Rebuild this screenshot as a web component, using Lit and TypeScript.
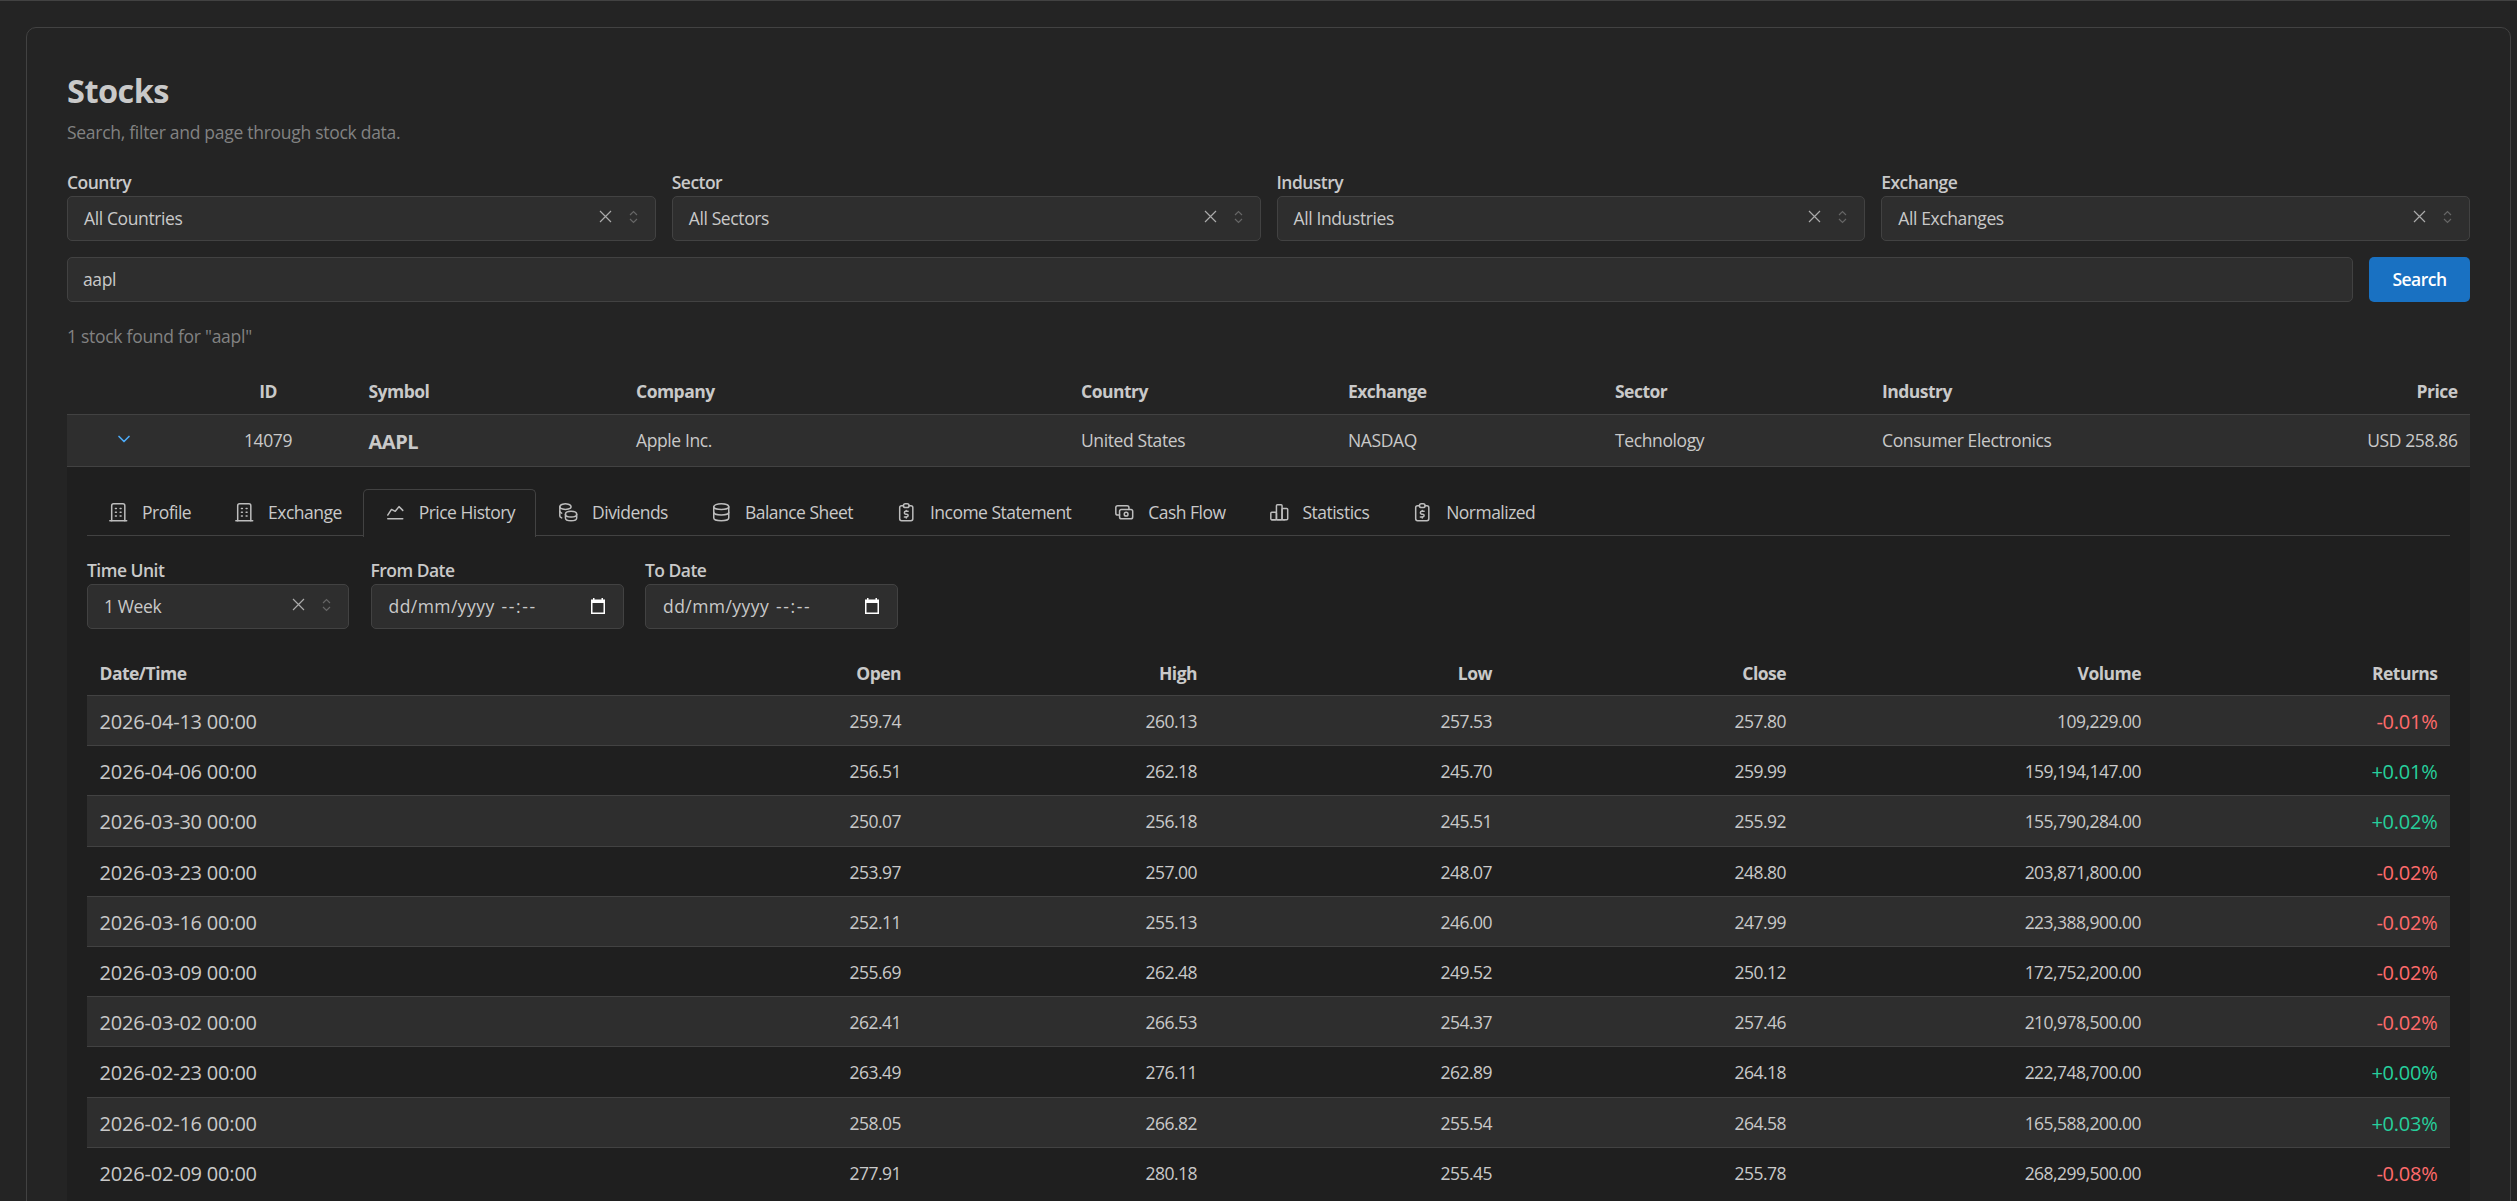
import { LitElement, html, css, svg } from "lit";
import { customElement } from "lit/decorators.js";

const ICONS: Record<string, string[]> = {
  building: ["M3 21l18 0", "M9 8l1 0", "M9 12l1 0", "M9 16l1 0", "M14 8l1 0", "M14 12l1 0", "M14 16l1 0", "M5 21v-16a2 2 0 0 1 2 -2h10a2 2 0 0 1 2 2v16"],
  chartLine: ["M4 19l16 0", "M4 15l4 -6l4 2l4 -5l4 4"],
  coins: [
    "M9 14c0 1.657 2.686 3 6 3s6 -1.343 6 -3s-2.686 -3 -6 -3s-6 1.343 -6 3z",
    "M9 14v4c0 1.656 2.686 3 6 3s6 -1.344 6 -3v-4",
    "M3 6c0 1.072 1.144 2.062 3 2.598s4.144 .536 6 0c1.856 -.536 3 -1.526 3 -2.598c0 -1.072 -1.144 -2.062 -3 -2.598s-4.144 -.536 -6 0c-1.856 .536 -3 1.526 -3 2.598z",
    "M3 6v10c0 .888 .772 1.45 2 2",
    "M3 11c0 .888 .772 1.45 2 2",
  ],
  database: ["M12 6m-8 0a8 3 0 1 0 16 0a8 3 0 1 0 -16 0", "M4 6v6a8 3 0 0 0 16 0v-6", "M4 12v6a8 3 0 0 0 16 0v-6"],
  report: [
    "M9 5h-2a2 2 0 0 0 -2 2v12a2 2 0 0 0 2 2h10a2 2 0 0 0 2 -2v-12a2 2 0 0 0 -2 -2h-2",
    "M9 3m0 2a2 2 0 0 1 2 -2h2a2 2 0 0 1 2 2v0a2 2 0 0 1 -2 2h-2a2 2 0 0 1 -2 -2z",
    "M14 11h-2.5a1.5 1.5 0 0 0 0 3h1a1.5 1.5 0 0 1 0 3h-2.5",
    "M12 17v1m0 -8v1",
  ],
  cash: [
    "M7 9m0 2a2 2 0 0 1 2 -2h10a2 2 0 0 1 2 2v6a2 2 0 0 1 -2 2h-10a2 2 0 0 1 -2 -2z",
    "M14 14m-2 0a2 2 0 1 0 4 0a2 2 0 1 0 -4 0",
    "M17 9v-2a2 2 0 0 0 -2 -2h-10a2 2 0 0 0 -2 2v6a2 2 0 0 0 2 2h2",
  ],
  chartBar: [
    "M3 13a1 1 0 0 1 1 -1h4a1 1 0 0 1 1 1v6a1 1 0 0 1 -1 1h-4a1 1 0 0 1 -1 -1z",
    "M15 9a1 1 0 0 1 1 -1h4a1 1 0 0 1 1 1v10a1 1 0 0 1 -1 1h-4a1 1 0 0 1 -1 -1z",
    "M9 5a1 1 0 0 1 1 -1h4a1 1 0 0 1 1 1v14a1 1 0 0 1 -1 1h-4a1 1 0 0 1 -1 -1z",
    "M4 20h14",
  ],
  chevronDown: ["M6 9l6 6l6 -6"],
};

const icon = (name: string) => html`<svg class="icon ${name}" viewBox="0 0 24 24" fill="none" stroke="currentColor" stroke-linecap="round" stroke-linejoin="round">
  ${ICONS[name].map((d) => svg`<path d=${d}></path>`)}
</svg>`;

const TABS = [
  ["Profile", "building"],
  ["Exchange", "building"],
  ["Price History", "chartLine"],
  ["Dividends", "coins"],
  ["Balance Sheet", "database"],
  ["Income Statement", "report"],
  ["Cash Flow", "cash"],
  ["Statistics", "chartBar"],
  ["Normalized", "report"],
];

const PRICES = [
  ["2026-04-13 00:00", "259.74", "260.13", "257.53", "257.80", "109,229.00", "-0.01%"],
  ["2026-04-06 00:00", "256.51", "262.18", "245.70", "259.99", "159,194,147.00", "+0.01%"],
  ["2026-03-30 00:00", "250.07", "256.18", "245.51", "255.92", "155,790,284.00", "+0.02%"],
  ["2026-03-23 00:00", "253.97", "257.00", "248.07", "248.80", "203,871,800.00", "-0.02%"],
  ["2026-03-16 00:00", "252.11", "255.13", "246.00", "247.99", "223,388,900.00", "-0.02%"],
  ["2026-03-09 00:00", "255.69", "262.48", "249.52", "250.12", "172,752,200.00", "-0.02%"],
  ["2026-03-02 00:00", "262.41", "266.53", "254.37", "257.46", "210,978,500.00", "-0.02%"],
  ["2026-02-23 00:00", "263.49", "276.11", "262.89", "264.18", "222,748,700.00", "+0.00%"],
  ["2026-02-16 00:00", "258.05", "266.82", "255.54", "264.58", "165,588,200.00", "+0.03%"],
  ["2026-02-09 00:00", "277.91", "280.18", "255.45", "255.78", "268,299,500.00", "-0.08%"],
];

@customElement("app-root")
export class AppRoot extends LitElement {
  static styles = css`
    :host {
      display: block;
      height: 100vh;
      overflow: hidden;
      box-sizing: border-box;
      background: #242424;
      border-top: 1px solid #424242;
      padding: 26px 6px 0 26px;
      color: #c9c9c9;
      font-family: "Open Sans", sans-serif;
      font-size: 17.5px;
      letter-spacing: -0.03em;
      line-height: 1.55;
    }
    * {
      box-sizing: border-box;
    }
    .card {
      border: 1px solid #424242;
      border-radius: 10px;
      padding: 42px 40px 40px;
    }
    h2 {
      margin: 0 0 6.5px;
      font-size: 32.5px;
      font-weight: 700;
      line-height: 1.3;
    }
    .sub {
      margin: 0 0 23px;
      color: #828282;
      letter-spacing: -0.016em;
    }
    .filters {
      display: grid;
      grid-template-columns: repeat(4, 1fr);
      gap: 16px;
    }
    label,
    .label {
      display: block;
      font-weight: 600;
      line-height: 27px;
    }
    .select,
    .date,
    .search input {
      height: 45px;
      background: #2e2e2e;
      border: 1px solid #424242;
      border-radius: 5px;
      color: #c9c9c9;
      font: inherit;
      letter-spacing: -0.022em;
    }
    .select {
      display: flex;
      align-items: center;
      padding: 0 16px;
    }
    .select .value {
      flex: 1;
      padding-top: 1px;
    }
    .x {
      width: 13px;
      height: 13px;
      color: #aaa;
      margin-right: 16px;
      margin-top: -3px;
    }
    .updown {
      width: 11px;
      height: 14px;
      color: #666;
      margin-top: -3px;
    }
    .search {
      display: flex;
      gap: 16px;
      margin-top: 16px;
    }
    .search input {
      flex: 1;
      padding: 0 15px;
      outline: none;
    }
    .search button {
      width: 101px;
      height: 45px;
      background: #1971c2;
      border: 0;
      border-radius: 5px;
      color: #fff;
      font: inherit;
      font-weight: 600;
      letter-spacing: inherit;
    }
    .count {
      margin: 21px 0 0;
      color: #828282;
      letter-spacing: -0.016em;
    }
    table {
      width: 100%;
      border-collapse: collapse;
      table-layout: fixed;
    }
    th,
    td {
      padding: 2px 12.5px 0;
      text-align: left;
      white-space: nowrap;
    }
    th {
      font-weight: 700;
    }
    .stocks {
      margin-top: 17px;
    }
    .stocks thead tr {
      height: 47px;
      border-bottom: 1px solid #424242;
    }
    .stocks tbody tr {
      height: 52px;
      background: #2e2e2e;
      border-bottom: 1px solid #424242;
    }
    .stocks td {
      letter-spacing: -0.022em;
    }
    .stocks .center {
      text-align: center;
    }
    .stocks .right {
      text-align: right;
    }
    .stocks .symbol {
      font-size: 20px;
      font-weight: 700;
    }
    .expand {
      color: #4dabf7;
    }
    .expand .icon {
      width: 20px;
      height: 20px;
      stroke-width: 2;
      display: block;
      margin: -4px auto 0;
    }
    .c0 { width: 113px; }
    .c1 { width: 176px; }
    .c2 { width: 267.5px; }
    .c3 { width: 445px; }
    .c4, .c5, .c6, .c7 { width: 267px; }
    .panel {
      background: #1f1f1f;
      padding: 22px 20px 20px;
    }
    .tabs {
      display: flex;
      border-bottom: 1px solid #424242;
      height: 47px;
    }
    .tab {
      display: flex;
      align-items: center;
      gap: 12.5px;
      height: 48px;
      padding: 0 20px;
      border: 1px solid transparent;
      border-bottom: 0;
      border-radius: 5px 5px 0 0;
    }
    .tab:first-child {
      margin-left: -1px;
    }
    .tab.active {
      border-color: #424242;
      background: #1f1f1f;
    }
    .tab .icon {
      width: 22.5px;
      height: 22.5px;
      stroke-width: 1.6;
      color: #bdbdbd;
      margin-top: -1px;
    }
    .range {
      display: flex;
      gap: 21.5px;
      margin-top: 21px;
    }
    .range .unit {
      width: 262px;
    }
    .range .when {
      width: 253px;
    }
    .date {
      display: flex;
      align-items: center;
      justify-content: space-between;
      padding: 1px 18px 0 17px;
      letter-spacing: 0.025em;
    }
    .date .time {
      margin-left: 7px;
      letter-spacing: 0.09em;
    }
    .date svg {
      width: 14px;
      height: 16px;
      margin-top: -1px;
    }
    .prices {
      margin-top: 21px;
    }
    .prices thead tr {
      height: 46px;
      border-bottom: 1px solid #424242;
    }
    .prices tbody tr {
      height: 50.2px;
      border-bottom: 1px solid #424242;
    }
    .prices tbody tr:nth-child(odd) {
      background: #2e2e2e;
    }
    .prices tbody tr:last-child {
      border-bottom: 0;
    }
    .prices th:not(:first-child),
    .prices td:not(:first-child) {
      text-align: right;
    }
    .prices .stamp {
      font-size: 20px;
      letter-spacing: -0.01em;
    }
    .prices .ret {
      font-size: 20px;
      letter-spacing: -0.012em;
    }
    .neg {
      color: #ff6b6b;
    }
    .pos {
      color: #26cf9c;
    }
    .p0 { width: 500px; }
    .p1 { width: 326.5px; }
    .p2 { width: 296px; }
    .p3 { width: 295px; }
    .p4 { width: 294px; }
    .p5 { width: 355px; }
  `;

  private selectBox(value: string) {
    return html`<div class="select">
      <span class="value">${value}</span>
      <svg class="x" viewBox="0 0 13 13" fill="none" stroke="currentColor" stroke-width="1.2"><path d="M1 1l11 11M12 1L1 12"></path></svg>
      <svg class="updown" viewBox="0 0 11 14" fill="none" stroke="currentColor" stroke-width="1.2"><path d="M2 5l3.5 -3.5L9 5M2 9l3.5 3.5L9 9"></path></svg>
    </div>`;
  }

  private dateBox() {
    return html`<div class="date">
      <span>dd/mm/yyyy<span class="time">--:--</span></span>
      <svg viewBox="0 0 14 16"><path fill="#fff" d="M2 0h1.5v1.5h7V0H12v1.5h2V16H0V1.5h2zM1.5 5v9.5h11V5z"></path></svg>
    </div>`;
  }

  render() {
    return html`
      <section class="card">
        <h2>Stocks</h2>
        <p class="sub">Search, filter and page through stock data.</p>
        <div class="filters">
          ${[["Country", "All Countries"], ["Sector", "All Sectors"], ["Industry", "All Industries"], ["Exchange", "All Exchanges"]].map(
            ([l, v]) => html`<div><label>${l}</label>${this.selectBox(v)}</div>`
          )}
        </div>
        <div class="search">
          <input type="text" value="aapl" />
          <button>Search</button>
        </div>
        <p class="count">1 stock found for "aapl"</p>

        <table class="stocks">
          <colgroup>
            <col class="c0" /><col class="c1" /><col class="c2" /><col class="c3" /><col class="c4" /><col class="c5" /><col class="c6" /><col class="c7" /><col />
          </colgroup>
          <thead>
            <tr>
              <th></th>
              <th class="center">ID</th>
              <th>Symbol</th>
              <th>Company</th>
              <th>Country</th>
              <th>Exchange</th>
              <th>Sector</th>
              <th>Industry</th>
              <th class="right">Price</th>
            </tr>
          </thead>
          <tbody>
            <tr>
              <td class="expand">${icon("chevronDown")}</td>
              <td class="center">14079</td>
              <td class="symbol">AAPL</td>
              <td>Apple Inc.</td>
              <td>United States</td>
              <td>NASDAQ</td>
              <td>Technology</td>
              <td>Consumer Electronics</td>
              <td class="right">USD 258.86</td>
            </tr>
          </tbody>
        </table>

        <div class="panel">
          <div class="tabs">
            ${TABS.map(
              ([name, ic]) => html`<div class="tab ${name === "Price History" ? "active" : ""}">${icon(ic)}<span>${name}</span></div>`
            )}
          </div>
          <div class="range">
            <div class="unit"><span class="label">Time Unit</span>${this.selectBox("1 Week")}</div>
            <div class="when"><span class="label">From Date</span>${this.dateBox()}</div>
            <div class="when"><span class="label">To Date</span>${this.dateBox()}</div>
          </div>
          <table class="prices">
            <colgroup>
              <col class="p0" /><col class="p1" /><col class="p2" /><col class="p3" /><col class="p4" /><col class="p5" /><col />
            </colgroup>
            <thead>
              <tr>
                <th>Date/Time</th>
                <th>Open</th>
                <th>High</th>
                <th>Low</th>
                <th>Close</th>
                <th>Volume</th>
                <th>Returns</th>
              </tr>
            </thead>
            <tbody>
              ${PRICES.map(
                (r) => html`<tr>
                  <td class="stamp">${r[0]}</td>
                  <td>${r[1]}</td>
                  <td>${r[2]}</td>
                  <td>${r[3]}</td>
                  <td>${r[4]}</td>
                  <td>${r[5]}</td>
                  <td class="ret ${r[6].startsWith("-") ? "neg" : "pos"}">${r[6]}</td>
                </tr>`
              )}
            </tbody>
          </table>
        </div>
      </section>
    `;
  }
}
